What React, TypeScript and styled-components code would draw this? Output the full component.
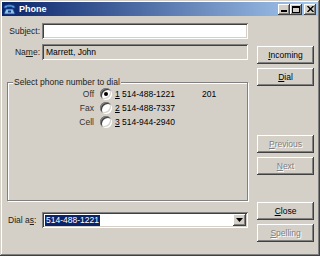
import React from 'react'
import styled, { createGlobalStyle, css } from 'styled-components'

const GlobalStyle = createGlobalStyle`
  html, body {
    margin: 0;
    padding: 0;
    background: #d4d0c8;
  }
  body {
    font-family: "Liberation Sans", Arial, sans-serif;
    font-size: 8.5px;
    color: #000;
  }
  #root {
    width: 320px;
    height: 256px;
  }
`

const raised = css`
  background: #d4d0c8;
  box-shadow: inset -1px -1px #404040, inset 1px 1px #fff, inset -2px -2px #808080, inset 2px 2px #d4d0c8;
`

const sunken = css`
  box-shadow: inset 1px 1px #808080, inset -1px -1px #fff, inset 2px 2px #404040, inset -2px -2px #d4d0c8;
`

const Window = styled.div`
  width: 320px;
  height: 256px;
  box-sizing: border-box;
  padding: 2px;
  background: #d4d0c8;
  box-shadow: inset -1px -1px #404040, inset 1px 1px #d4d0c8, inset -2px -2px #808080, inset 2px 2px #fff;
  display: flex;
  flex-direction: column;
`

const TitleBar = styled.div`
  height: 14px;
  display: flex;
  align-items: center;
  padding: 0 2px 0 1px;
  background: linear-gradient(to right, #0a246a, #a6caf0);
`

const Caption = styled.span`
  flex: 1;
  margin-left: 3px;
  color: #fff;
  font-weight: bold;
  font-size: 9px;
`

const CaptionButton = styled.div<{ $gap?: number }>`
  ${raised};
  width: 12px;
  height: 11px;
  margin-left: ${p => p.$gap ?? 0}px;
  display: flex;
  align-items: center;
  justify-content: center;
`

const Body = styled.div`
  flex: 1;
  display: grid;
  grid-template-columns: 241px 57px;
  column-gap: 9px;
  padding-left: 5px;
`

const LeftColumn = styled.div`
  display: flex;
  flex-direction: column;
`

const RightColumn = styled.div`
  display: flex;
  flex-direction: column;
`

const FieldRow = styled.div<{ $top: number }>`
  display: flex;
  align-items: center;
  height: 16px;
  margin-top: ${p => p.$top}px;
`

const FieldLabel = styled.label<{ $align?: 'left' | 'right' }>`
  width: 35px;
  flex: none;
  box-sizing: border-box;
  text-align: ${p => p.$align ?? 'right'};
  padding: ${p => (p.$align === 'left' ? '0 0 0 1px' : '0 2px 0 0')};
  color: #222;
`

const TextBox = styled.div<{ $disabled?: boolean }>`
  ${sunken};
  flex: 1;
  height: 16px;
  box-sizing: border-box;
  padding: 0 4px;
  display: flex;
  align-items: center;
  background: ${p => (p.$disabled ? '#d4d0c8' : '#fff')};
`

const GroupBox = styled.fieldset`
  margin: 17px 0 0;
  padding: 0;
  height: 124px;
  box-sizing: border-box;
  min-width: 0;
  border: 1px solid #808080;
  box-shadow: inset 1px 1px #fff, 1px 1px #fff;
`

const Legend = styled.legend`
  margin-left: 5px;
  padding: 0 1px;
  line-height: 10px;
  background: #d4d0c8;
  color: #222;
`

const RadioRow = styled.div`
  display: flex;
  align-items: center;
  height: 14px;
`

const RadioLabel = styled.span`
  width: 86px;
  text-align: right;
  color: #333;
`

const Radio = styled.span<{ $checked?: boolean }>`
  position: relative;
  width: 12px;
  height: 12px;
  margin-left: 6px;
  border-radius: 50%;
  background: #fff;
  box-shadow: inset 1px 1px #808080, inset -1px -1px #fff, inset 2px 2px #404040, inset -2px -2px #d4d0c8;
  ${p =>
    p.$checked &&
    css`
      &::after {
        content: '';
        position: absolute;
        left: 4px;
        top: 4px;
        width: 4px;
        height: 4px;
        border-radius: 50%;
        background: #000;
      }
    `}
`

const Number = styled.span`
  width: 84px;
  padding-left: 3px;
`

const Extension = styled.span`
  padding-left: 3px;
`

const Button = styled.div<{ $top?: number; $disabled?: boolean }>`
  ${raised};
  height: 18px;
  margin-top: ${p => p.$top ?? 4}px;
  display: flex;
  align-items: center;
  justify-content: center;
  color: ${p => (p.$disabled ? '#808080' : '#000')};
  text-shadow: ${p => (p.$disabled ? '1px 1px #fff' : 'none')};
`

const Combo = styled(TextBox)`
  padding: 0 2px 0 3px;
`

const Selection = styled.span`
  background: #0a246a;
  color: #fff;
  padding: 0 1px;
  line-height: 11px;
`

const DropButton = styled.div`
  ${raised};
  margin-left: auto;
  width: 13px;
  height: 12px;
  display: flex;
  align-items: center;
  justify-content: center;
`

const PhoneIcon = () => (
  <svg width="13" height="12" viewBox="0 0 13 12">
    <path d="M1 4 C1 1 12 1 12 4 L12 5 L9 5 L9 4 L4 4 L4 5 L1 5 Z" fill="#5aa0e0" stroke="#1c3f8a" strokeWidth="0.8" />
    <path d="M3 6 L10 6 L12 11 L1 11 Z" fill="#8cc4f0" stroke="#1c3f8a" strokeWidth="0.8" />
    <rect x="5" y="7.5" width="3" height="2" fill="#1c3f8a" />
  </svg>
)

const App = () => {
  return (
    <>
      <GlobalStyle />
      <Window>
        <TitleBar>
          <PhoneIcon />
          <Caption>Phone</Caption>
          <CaptionButton>
            <svg width="6" height="6" viewBox="0 0 6 6"><rect x="0" y="4" width="6" height="2" fill="#000" /></svg>
          </CaptionButton>
          <CaptionButton>
            <svg width="8" height="7" viewBox="0 0 8 7"><rect x="0.5" y="0.5" width="7" height="6" fill="none" stroke="#000" /><rect x="0" y="0" width="8" height="2" fill="#000" /></svg>
          </CaptionButton>
          <CaptionButton $gap={2}>
            <svg width="7" height="6" viewBox="0 0 7 6"><path d="M0.5 0 L6.5 6 M6.5 0 L0.5 6" stroke="#000" strokeWidth="1.4" /></svg>
          </CaptionButton>
        </TitleBar>
        <Body>
          <LeftColumn>
            <FieldRow $top={7}>
              <FieldLabel>Sub<u>j</u>ect:</FieldLabel>
              <TextBox />
            </FieldRow>
            <FieldRow $top={5}>
              <FieldLabel>Na<u>m</u>e:</FieldLabel>
              <TextBox $disabled>Marrett, John</TextBox>
            </FieldRow>
            <GroupBox>
              <Legend>Select phone number to dial</Legend>
              <RadioRow>
                <RadioLabel>Off</RadioLabel>
                <Radio $checked />
                <Number><u>1</u> 514-488-1221</Number>
                <Extension>201</Extension>
              </RadioRow>
              <RadioRow>
                <RadioLabel>Fax</RadioLabel>
                <Radio />
                <Number><u>2</u> 514-488-7337</Number>
              </RadioRow>
              <RadioRow>
                <RadioLabel>Cell</RadioLabel>
                <Radio />
                <Number><u>3</u> 514-944-2940</Number>
              </RadioRow>
            </GroupBox>
            <FieldRow $top={11}>
              <FieldLabel $align="left">Dial a<u>s</u>:</FieldLabel>
              <Combo>
                <Selection>514-488-1221</Selection>
                <DropButton>
                  <svg width="7" height="4" viewBox="0 0 7 4"><path d="M0 0 L7 0 L3.5 4 Z" fill="#000" /></svg>
                </DropButton>
              </Combo>
            </FieldRow>
          </LeftColumn>
          <RightColumn>
            <Button $top={30}><u>I</u>ncoming</Button>
            <Button><u>D</u>ial</Button>
            <Button $top={49} $disabled><u>P</u>revious</Button>
            <Button $disabled><u>N</u>ext</Button>
            <Button $top={27}><u>C</u>lose</Button>
            <Button $disabled><u>S</u>pelling</Button>
          </RightColumn>
        </Body>
      </Window>
    </>
  )
}

export default App
